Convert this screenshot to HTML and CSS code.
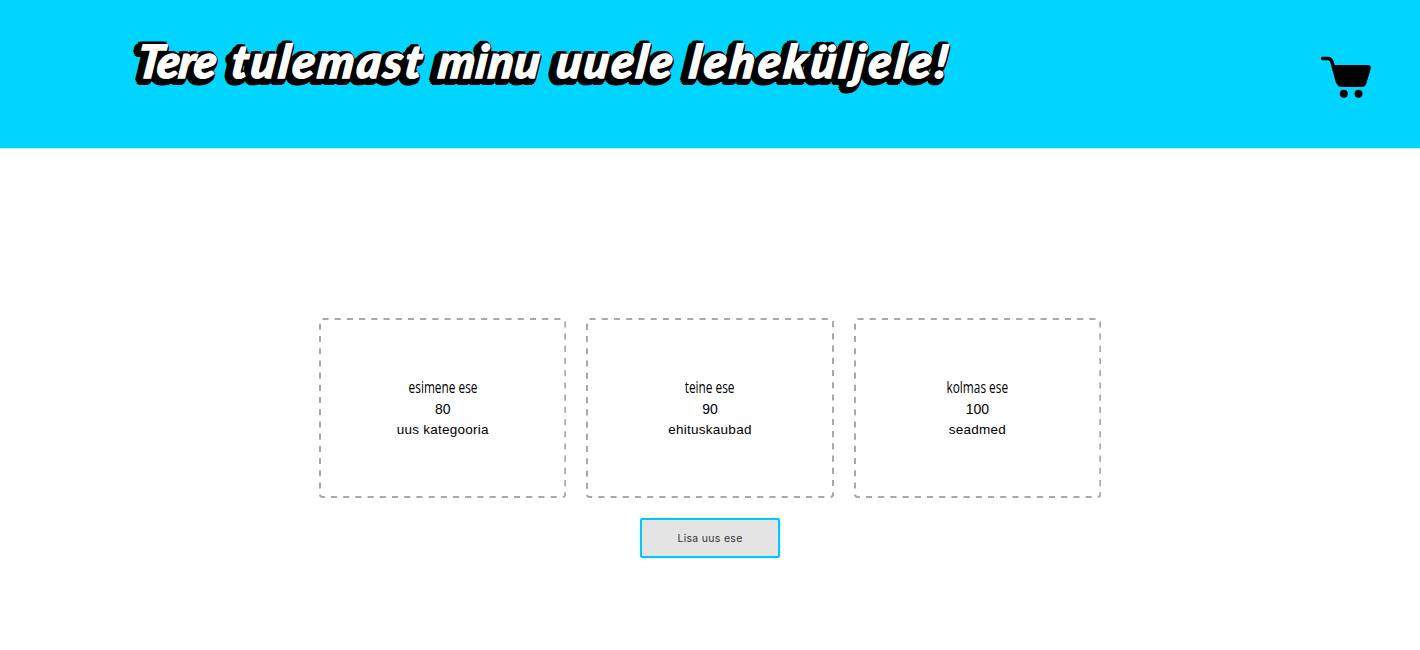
FILE: index.html
```
<!DOCTYPE html>
<html lang="et">
<head>
<meta charset="utf-8">
<title>Esemed</title>
<link rel="stylesheet" href="styles.css">
</head>
<body>
<header class="header">
  <h1 class="title"><span class="w1">Tere</span> <span class="w2">tulemast</span> <span class="w3">minu</span> <span class="w4">uuele</span> <span class="w5">leheküljele!</span></h1>
  <svg class="cart" width="52" height="44" viewBox="0 0 52 44">
    <path d="M2.500 3.500H8Q11 3.500 12 7L17.500 27" fill="none" stroke="#000" stroke-width="3.400" stroke-linecap="round"/>
    <path d="M12.500 10H47.500Q51.500 10 50.700 14L46.300 28.500Q45 32 41.500 32H21.500Q18 32 17 28.500Z"/>
    <circle cx="23.800" cy="38.700" r="4"/><circle cx="38.500" cy="38.700" r="4"/>
  </svg>
</header>
<main class="main">
  <section class="cards">
    <article class="card"><svg class="frame"><rect x="1" y="1" width="245.300" height="178" rx="2.500" pathLength="69"/></svg><h2 class="name">esimene ese</h2><p class="price">80</p><p class="category">uus kategooria</p></article>
    <article class="card"><svg class="frame"><rect x="1" y="1" width="246" height="178" rx="2.500" pathLength="69"/></svg><h2 class="name">teine ese</h2><p class="price">90</p><p class="category">ehituskaubad</p></article>
    <article class="card"><svg class="frame"><rect x="1" y="1" width="245.300" height="178" rx="2.500" pathLength="69"/></svg><h2 class="name">kolmas ese</h2><p class="price">100</p><p class="category">seadmed</p></article>
  </section>
  <button class="add" type="button">Lisa uus ese</button>
</main>
</body>
</html>
```
FILE: styles.css
```
* { box-sizing: border-box; }
body { margin: 0; height: 650px; background: #fff; color: #000; font-family: "Liberation Sans", Arial, sans-serif; }
.header { display: flex; justify-content: space-between; align-items: flex-start; height: 149px; padding: 31px 48px 0 138px; background: #00d5ff; border-bottom: 1px solid #a8f0ff; }
.title {
  display: flex; margin: 0; font: italic 900 46px/60px Lato, sans-serif; color: #fff; white-space: nowrap;
  -webkit-text-stroke: 1.300px #fff;
  text-shadow: -3px 2px #000, 2px 2px #000, 1.600px 3.900px #000, .5px 5.500px #000, -1.100px 6.600px #000, -3px 7px #000, -4.900px 6.600px #000, -6.500px 5.500px #000, -7.800px 3.900px #000, -8.500px 2px #000, -7.800px .1px #000, -6.500px -1.500px #000, -4.900px -2.600px #000, -3px -3px #000, -1.100px -2.600px #000, .5px -1.500px #000, 1.600px .1px #000, -3px 4px #000, -5px 2px #000, -3px 0 #000;
}
.title span { transform: skewX(-7deg); transform-origin: 0 50%; }
.w1 { width: 94px; letter-spacing: -1px; }
.w2 { width: 207px; letter-spacing: 2.600px; }
.w3 { width: 118px; letter-spacing: 1px; }
.w4 { width: 133px; letter-spacing: 2.400px; }
.w5 { width: 264px; letter-spacing: 3.300px; }
.cart { margin-top: 24px; }
.main { display: flex; flex-direction: column; align-items: center; padding-top: 169px; }
.cards { display: grid; grid-template-columns: repeat(3, 1fr); gap: 20px; width: 782px; }
.card { position: relative; display: flex; flex-direction: column; align-items: center; height: 180px; padding-top: 60px; }
.frame { position: absolute; inset: 0; width: 100%; height: 100%; fill: none; stroke: #a9a9a9; stroke-width: 2; stroke-dasharray: .5 .5; }
.name { margin: 0; font: 400 15.500px/19px "Open Sans", sans-serif; white-space: nowrap; transform: scaleX(.765); }
.price, .category { margin: 0; font-size: 14px; line-height: 20px; white-space: nowrap; }
.price { margin-top: 2px; }
.category { margin-top: 1px; font-size: 13.500px; letter-spacing: .25px; }
.add { width: 140px; height: 40px; margin-top: 20px; padding: 1px 0 0; border: 2px solid #00c8ff; border-radius: 3px; background: #e4e4e4; box-shadow: 0 0 1px #00c8ff; color: #333; font: 10.500px Inter, sans-serif; letter-spacing: .3px; }
```
